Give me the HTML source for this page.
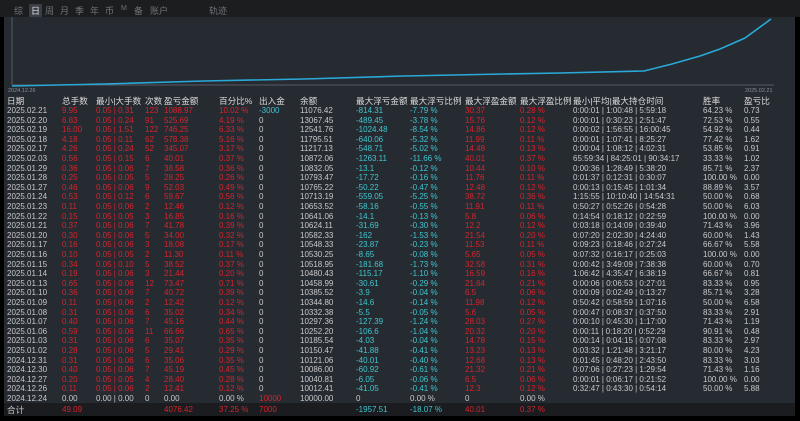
<!DOCTYPE html><html><head><meta charset="utf-8"><style>
body{margin:0;width:800px;height:421px;background:#000;overflow:hidden;font-family:"Liberation Sans","Noto Sans CJK SC",sans-serif;position:relative}
#top{position:absolute;left:0;top:0;width:800px;height:17px;background:#1c1d1f}
#top span{position:absolute;top:4px;font-size:9px;color:#6f737a}
#main{position:absolute;left:4px;top:17px;width:791px;height:399px;background:#262a31}
.r{position:absolute;left:0;height:10px;width:791px;font-size:8px;line-height:10px;color:#c9c9c9;white-space:nowrap}
.r span{position:absolute}
.r span:nth-child(1){left:3px}.r span:nth-child(2){left:58px;color:#d6242c}.r span:nth-child(3){left:92px;color:#d6242c}
.r span:nth-child(4){left:141px;color:#d6242c}.r span:nth-child(5){left:160px;color:#d6242c}.r span:nth-child(6){left:215px;color:#d6242c}
.r span:nth-child(7){left:255px}.r span:nth-child(8){left:296px}.r span:nth-child(9){left:352px;color:#3fc6cf}
.r span:nth-child(10){left:406px;color:#3fc6cf}.r span:nth-child(11){left:461px;color:#d6242c}.r span:nth-child(12){left:516px;color:#d6242c}
.r span:nth-child(13){left:569px}.r span:nth-child(14){left:699px}.r span:nth-child(15){left:740px}
.h span{color:#dcdcdc!important;font-size:8.6px}
.g span{color:#c9c9c9!important}
.r span.c{color:#3fc6cf}.r span.rd{color:#d6242c!important}
#tot{position:absolute;left:0;top:386px;width:791px;height:13px;background:#1a1c1f}
</style></head><body>
<div id="top">
<span style="left:14px">综</span><span style="left:29px;color:#e0e0e0;background:#3a3e46;padding:0 2px">日</span><span style="left:45px">周</span><span style="left:60px">月</span><span style="left:75px">季</span><span style="left:90px">年</span><span style="left:105px">币</span><span style="left:121px;font-size:7px;top:5px">M</span><span style="left:134px">备</span><span style="left:150px">账户</span><span style="left:209px">轨迹</span>
</div>
<div id="main">
<svg width="791" height="78" style="position:absolute;left:0;top:0">
<line x1="8" y1="0" x2="8" y2="68" stroke="#555a62" stroke-width="1"/>
<line x1="8" y1="68" x2="770" y2="68" stroke="#555a62" stroke-width="1"/>
<polyline fill="none" stroke="#2aa9d8" stroke-width="1.6" points="8,69 100,67 200,64 300,62 400,59 500,57 556,56 640,54 668,47 696,39 716,32 741,21 767,2"/>
<text x="4" y="75" font-size="5.5" fill="#8a8e95" font-family="Liberation Sans">2024.12.26</text>
<text x="741" y="75" font-size="5.5" fill="#8a8e95" font-family="Liberation Sans">2025.02.21</text>
</svg>
<div id="tot"></div>
<div class="r h" style="top:79px"><span>日期</span><span>总手数</span><span>最小|大手数</span><span>次数</span><span>盈亏金额</span><span>百分比%</span><span>出入金</span><span>余额</span><span>最大浮亏金额</span><span>最大浮亏比例</span><span>最大浮盈金额</span><span>最大浮盈比例</span><span>最小|平均|最大持仓时间</span><span>胜率</span><span>盈亏比</span></div>
<div class="r" style="top:89px"><span>2025.02.21</span><span>9.95</span><span>0.05 | 0.31</span><span>123</span><span>1088.97</span><span>10.02 %</span><span class="c">-3000</span><span>11076.42</span><span>-814.31</span><span>-7.79 %</span><span>30.37</span><span>0.28 %</span><span>0:00:01 | 1:00:48 | 5:59:18</span><span>64.23 %</span><span>0.73</span></div>
<div class="r" style="top:98.6px"><span>2025.02.20</span><span>6.83</span><span>0.05 | 0.24</span><span>91</span><span>525.69</span><span>4.19 %</span><span>0</span><span>13067.45</span><span>-489.45</span><span>-3.78 %</span><span>15.76</span><span>0.12 %</span><span>0:00:01 | 0:30:23 | 2:51:47</span><span>72.53 %</span><span>0.55</span></div>
<div class="r" style="top:108.2px"><span>2025.02.19</span><span>16.00</span><span>0.05 | 1.51</span><span>122</span><span>746.25</span><span>6.33 %</span><span>0</span><span>12541.76</span><span>-1024.48</span><span>-8.54 %</span><span>14.86</span><span>0.12 %</span><span>0:00:02 | 1:56:55 | 16:00:45</span><span>54.92 %</span><span>0.44</span></div>
<div class="r" style="top:117.8px"><span>2025.02.18</span><span>4.18</span><span>0.05 | 0.11</span><span>62</span><span>578.38</span><span>5.16 %</span><span>0</span><span>11795.51</span><span>-640.06</span><span>-5.32 %</span><span>11.99</span><span>0.11 %</span><span>0:00:01 | 1:07:41 | 8:25:27</span><span>77.42 %</span><span>1.62</span></div>
<div class="r" style="top:127.4px"><span>2025.02.17</span><span>4.26</span><span>0.05 | 0.24</span><span>52</span><span>345.07</span><span>3.17 %</span><span>0</span><span>11217.13</span><span>-548.71</span><span>-5.02 %</span><span>14.48</span><span>0.13 %</span><span>0:00:04 | 1:08:12 | 4:02:31</span><span>53.85 %</span><span>0.91</span></div>
<div class="r" style="top:137px"><span>2025.02.03</span><span>0.56</span><span>0.05 | 0.15</span><span>6</span><span>40.01</span><span>0.37 %</span><span>0</span><span>10872.06</span><span>-1263.11</span><span>-11.66 %</span><span>40.01</span><span>0.37 %</span><span>65:59:34 | 84:25:01 | 90:34:17</span><span>33.33 %</span><span>1.02</span></div>
<div class="r" style="top:146.6px"><span>2025.01.29</span><span>0.36</span><span>0.05 | 0.06</span><span>7</span><span>38.58</span><span>0.36 %</span><span>0</span><span>10832.05</span><span>-13.1</span><span>-0.12 %</span><span>10.44</span><span>0.10 %</span><span>0:00:36 | 1:28:49 | 5:38:20</span><span>85.71 %</span><span>2.37</span></div>
<div class="r" style="top:156.2px"><span>2025.01.28</span><span>0.25</span><span>0.05 | 0.05</span><span>5</span><span>28.25</span><span>0.26 %</span><span>0</span><span>10793.47</span><span>-17.72</span><span>-0.16 %</span><span>11.76</span><span>0.11 %</span><span>0:01:37 | 0:12:31 | 0:30:07</span><span>100.00 %</span><span>0.00</span></div>
<div class="r" style="top:165.8px"><span>2025.01.27</span><span>0.46</span><span>0.05 | 0.06</span><span>9</span><span>52.03</span><span>0.49 %</span><span>0</span><span>10765.22</span><span>-50.22</span><span>-0.47 %</span><span>12.48</span><span>0.12 %</span><span>0:00:13 | 0:15:45 | 1:01:34</span><span>88.89 %</span><span>3.57</span></div>
<div class="r" style="top:175.4px"><span>2025.01.24</span><span>0.53</span><span>0.05 | 0.12</span><span>6</span><span>59.67</span><span>0.56 %</span><span>0</span><span>10713.19</span><span>-559.05</span><span>-5.25 %</span><span>38.72</span><span>0.36 %</span><span>1:15:55 | 10:10:40 | 14:54:31</span><span>50.00 %</span><span>0.68</span></div>
<div class="r" style="top:185px"><span>2025.01.23</span><span>0.11</span><span>0.05 | 0.06</span><span>2</span><span>12.46</span><span>0.12 %</span><span>0</span><span>10653.52</span><span>-58.16</span><span>-0.55 %</span><span>11.91</span><span>0.11 %</span><span>0:50:27 | 0:52:26 | 0:54:28</span><span>50.00 %</span><span>6.03</span></div>
<div class="r" style="top:194.6px"><span>2025.01.22</span><span>0.15</span><span>0.05 | 0.05</span><span>3</span><span>16.85</span><span>0.16 %</span><span>0</span><span>10641.06</span><span>-14.1</span><span>-0.13 %</span><span>5.8</span><span>0.06 %</span><span>0:14:54 | 0:18:12 | 0:22:59</span><span>100.00 %</span><span>0.00</span></div>
<div class="r" style="top:204.2px"><span>2025.01.21</span><span>0.37</span><span>0.05 | 0.06</span><span>7</span><span>41.78</span><span>0.39 %</span><span>0</span><span>10624.11</span><span>-31.69</span><span>-0.30 %</span><span>12.2</span><span>0.12 %</span><span>0:03:18 | 0:14:09 | 0:39:40</span><span>71.43 %</span><span>3.96</span></div>
<div class="r" style="top:213.8px"><span>2025.01.20</span><span>0.30</span><span>0.05 | 0.06</span><span>5</span><span>34.00</span><span>0.32 %</span><span>0</span><span>10582.33</span><span>-162</span><span>-1.53 %</span><span>21.54</span><span>0.20 %</span><span>0:07:20 | 2:02:30 | 4:24:40</span><span>60.00 %</span><span>1.43</span></div>
<div class="r" style="top:223.4px"><span>2025.01.17</span><span>0.16</span><span>0.05 | 0.06</span><span>3</span><span>18.08</span><span>0.17 %</span><span>0</span><span>10548.33</span><span>-23.87</span><span>-0.23 %</span><span>11.53</span><span>0.11 %</span><span>0:09:23 | 0:18:46 | 0:27:24</span><span>66.67 %</span><span>5.58</span></div>
<div class="r" style="top:233px"><span>2025.01.16</span><span>0.10</span><span>0.05 | 0.05</span><span>2</span><span>11.30</span><span>0.11 %</span><span>0</span><span>10530.25</span><span>-8.65</span><span>-0.08 %</span><span>5.65</span><span>0.05 %</span><span>0:07:32 | 0:16:17 | 0:25:03</span><span>100.00 %</span><span>0.00</span></div>
<div class="r" style="top:242.6px"><span>2025.01.15</span><span>0.34</span><span>0.05 | 0.10</span><span>5</span><span>38.52</span><span>0.37 %</span><span>0</span><span>10518.95</span><span>-181.68</span><span>-1.73 %</span><span>32.58</span><span>0.31 %</span><span>0:00:42 | 3:49:09 | 7:38:38</span><span>60.00 %</span><span>0.70</span></div>
<div class="r" style="top:252.2px"><span>2025.01.14</span><span>0.19</span><span>0.05 | 0.06</span><span>3</span><span>21.44</span><span>0.20 %</span><span>0</span><span>10480.43</span><span>-115.17</span><span>-1.10 %</span><span>16.59</span><span>0.16 %</span><span>1:06:42 | 4:35:47 | 6:38:19</span><span>66.67 %</span><span>0.81</span></div>
<div class="r" style="top:261.8px"><span>2025.01.13</span><span>0.65</span><span>0.05 | 0.06</span><span>12</span><span>73.47</span><span>0.71 %</span><span>0</span><span>10458.99</span><span>-30.61</span><span>-0.29 %</span><span>21.64</span><span>0.21 %</span><span>0:00:06 | 0:06:53 | 0:27:01</span><span>83.33 %</span><span>0.95</span></div>
<div class="r" style="top:271.4px"><span>2025.01.10</span><span>0.36</span><span>0.05 | 0.06</span><span>7</span><span>40.72</span><span>0.39 %</span><span>0</span><span>10385.52</span><span>-3.9</span><span>-0.04 %</span><span>6.5</span><span>0.06 %</span><span>0:00:09 | 0:02:49 | 0:13:27</span><span>85.71 %</span><span>3.28</span></div>
<div class="r" style="top:281px"><span>2025.01.09</span><span>0.11</span><span>0.05 | 0.06</span><span>2</span><span>12.42</span><span>0.12 %</span><span>0</span><span>10344.80</span><span>-14.6</span><span>-0.14 %</span><span>11.98</span><span>0.12 %</span><span>0:50:42 | 0:58:59 | 1:07:16</span><span>50.00 %</span><span>6.58</span></div>
<div class="r" style="top:290.6px"><span>2025.01.08</span><span>0.31</span><span>0.05 | 0.06</span><span>6</span><span>35.02</span><span>0.34 %</span><span>0</span><span>10332.38</span><span>-5.5</span><span>-0.05 %</span><span>5.6</span><span>0.05 %</span><span>0:00:47 | 0:08:37 | 0:37:50</span><span>83.33 %</span><span>2.91</span></div>
<div class="r" style="top:300.2px"><span>2025.01.07</span><span>0.40</span><span>0.05 | 0.06</span><span>7</span><span>45.16</span><span>0.44 %</span><span>0</span><span>10297.36</span><span>-127.39</span><span>-1.24 %</span><span>28.03</span><span>0.27 %</span><span>0:00:10 | 0:45:30 | 1:17:00</span><span>71.43 %</span><span>1.19</span></div>
<div class="r" style="top:309.8px"><span>2025.01.06</span><span>0.59</span><span>0.05 | 0.06</span><span>11</span><span>66.66</span><span>0.65 %</span><span>0</span><span>10252.20</span><span>-106.6</span><span>-1.04 %</span><span>20.32</span><span>0.20 %</span><span>0:00:11 | 0:18:20 | 0:52:29</span><span>90.91 %</span><span>0.48</span></div>
<div class="r" style="top:319.4px"><span>2025.01.03</span><span>0.31</span><span>0.05 | 0.06</span><span>6</span><span>35.07</span><span>0.35 %</span><span>0</span><span>10185.54</span><span>-4.03</span><span>-0.04 %</span><span>14.78</span><span>0.15 %</span><span>0:00:14 | 0:04:15 | 0:07:08</span><span>83.33 %</span><span>2.97</span></div>
<div class="r" style="top:329px"><span>2025.01.02</span><span>0.28</span><span>0.05 | 0.06</span><span>5</span><span>29.41</span><span>0.29 %</span><span>0</span><span>10150.47</span><span>-41.88</span><span>-0.41 %</span><span>13.23</span><span>0.13 %</span><span>0:03:32 | 1:21:48 | 3:21:17</span><span>80.00 %</span><span>4.23</span></div>
<div class="r" style="top:338.6px"><span>2024.12.31</span><span>0.31</span><span>0.05 | 0.06</span><span>6</span><span>35.06</span><span>0.35 %</span><span>0</span><span>10121.06</span><span>-40.01</span><span>-0.40 %</span><span>12.68</span><span>0.13 %</span><span>0:01:45 | 0:48:20 | 2:43:50</span><span>83.33 %</span><span>3.03</span></div>
<div class="r" style="top:348.2px"><span>2024.12.30</span><span>0.40</span><span>0.05 | 0.06</span><span>7</span><span>45.19</span><span>0.45 %</span><span>0</span><span>10086.00</span><span>-60.92</span><span>-0.61 %</span><span>21.32</span><span>0.21 %</span><span>0:07:06 | 0:27:23 | 1:29:54</span><span>71.43 %</span><span>1.16</span></div>
<div class="r" style="top:357.8px"><span>2024.12.27</span><span>0.20</span><span>0.05 | 0.05</span><span>4</span><span>28.40</span><span>0.28 %</span><span>0</span><span>10040.81</span><span>-6.05</span><span>-0.06 %</span><span>6.5</span><span>0.06 %</span><span>0:00:01 | 0:06:17 | 0:21:52</span><span>100.00 %</span><span>0.00</span></div>
<div class="r" style="top:367.4px"><span>2024.12.26</span><span>0.11</span><span>0.05 | 0.06</span><span>2</span><span>12.41</span><span>0.12 %</span><span>0</span><span>10012.41</span><span>-41.05</span><span>-0.41 %</span><span>12.3</span><span>0.12 %</span><span>0:32:47 | 0:43:30 | 0:54:14</span><span>50.00 %</span><span>5.88</span></div>
<div class="r g" style="top:377px"><span>2024.12.24</span><span>0.00</span><span>0.00 | 0.00</span><span>0</span><span>0.00</span><span>0.00 %</span><span class="rd">10000</span><span>10000.00</span><span>0</span><span>0.00 %</span><span>0</span><span>0.00 %</span></div>
<div class="r" style="top:387.5px"><span style="font-size:8.6px">合计</span><span>49.09</span><span></span><span></span><span>4076.42</span><span>37.25 %</span><span class="rd">7000</span><span></span><span>-1957.51</span><span>-18.07 %</span><span>40.01</span><span>0.37 %</span></div>
</div>
</body></html>
